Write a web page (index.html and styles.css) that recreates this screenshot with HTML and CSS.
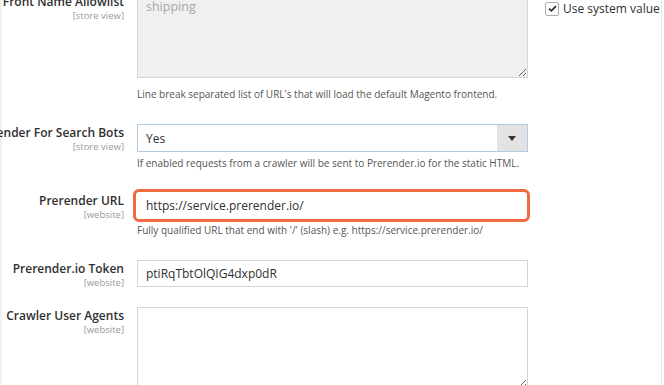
FILE: index.html
```html
<!DOCTYPE html>
<html lang="en">
<head>
    <meta charset="UTF-8">
    <meta name="viewport" content="width=device-width, initial-scale=1.0">
    <title>Prerender Configuration</title>
    <link rel="stylesheet" href="styles.css">
</head>
<body>
    <div class="page">
        <!-- Front Name Allowlist -->
        <div class="row row-allowlist">
            <div class="label">
                <span class="label-text">Front Name Allowlist</span>
                <span class="scope">[store view]</span>
            </div>
            <div class="control">
                <textarea class="textarea textarea-disabled" disabled>shipping</textarea>
                <p class="note note-first">Line break separated list of URL's that will load the default Magento frontend.</p>
            </div>
            <div class="system">
                <label class="checkbox">
                    <span class="box">
                        <svg viewBox="0 0 12 12" width="11" height="11"><path d="M2.2 6.2 L4.8 8.6 L9.8 3.4" fill="none" stroke="#303030" stroke-width="1.9"/></svg>
                    </span>
                    Use system value
                </label>
            </div>
        </div>

        <!-- Prerender For Search Bots -->
        <div class="row row-bots">
            <div class="label">
                <span class="label-text">Prerender For Search Bots</span>
                <span class="scope">[store view]</span>
            </div>
            <div class="control">
                <div class="select">
                    <span class="select-value">Yes</span>
                    <span class="select-arrow"></span>
                </div>
                <p class="note">If enabled requests from a crawler will be sent to Prerender.io for the static HTML.</p>
            </div>
        </div>

        <!-- Prerender URL -->
        <div class="row row-url">
            <div class="label">
                <span class="label-text">Prerender URL</span>
                <span class="scope">[website]</span>
            </div>
            <div class="control">
                <div class="highlight">
                    <input type="text" class="input input-plain" value="https://service.prerender.io/">
                </div>
                <p class="note">Fully qualified URL that end with '/' (slash) e.g. https://service.prerender.io/</p>
            </div>
        </div>

        <!-- Token -->
        <div class="row row-token">
            <div class="label">
                <span class="label-text">Prerender.io Token</span>
                <span class="scope">[website]</span>
            </div>
            <div class="control">
                <input type="text" class="input" value="ptiRqTbtOlQIG4dxp0dR">
            </div>
        </div>

        <!-- Crawler User Agents -->
        <div class="row row-agents">
            <div class="label">
                <span class="label-text">Crawler User Agents</span>
                <span class="scope">[website]</span>
            </div>
            <div class="control">
                <textarea class="textarea textarea-agents"></textarea>
            </div>
        </div>
    </div>
</body>
</html>
```

FILE: styles.css
```css
/* Base */
body {
    margin: 0;
    padding: 0;
    background: #ffffff;
    font-family: "Open Sans", "Liberation Sans", Arial, sans-serif;
    color: #303030;
    overflow: hidden;
}

.page {
    width: 661px;
    height: 385px;
    border-right: 1px solid #e6e6e6;
    box-shadow: inset 3px 0 3px -2px #e4e4e4;
    overflow: hidden;
}

.row {
    display: grid;
    grid-template-columns: 124px 391px 1fr;
    column-gap: 13px;
    align-items: start;
}

.row-allowlist {
    margin-top: -7px;
    margin-bottom: 23px;
}

.row-bots {
    margin-bottom: 22px;
}

.row-url {
    margin-bottom: 23px;
}

.row-token {
    margin-bottom: 19px;
}

/* Labels */
.label {
    display: flex;
    flex-direction: column;
    align-items: flex-end;
    text-align: right;
    padding-top: 1px;
    white-space: nowrap;
}

.label-text {
    font-size: 12px;
    font-weight: 600;
    line-height: 16px;
    color: #303030;
}

.scope {
    font-size: 9.5px;
    line-height: 11px;
    color: #999999;
}

/* Controls */
.textarea {
    display: block;
    box-sizing: border-box;
    width: 391px;
    margin: 0;
    padding: 5px 8px;
    border: 1px solid #d6d6d6;
    font-family: inherit;
    font-size: 12.5px;
    line-height: 16px;
    resize: vertical;
}

.textarea-disabled {
    height: 85px;
    background: #f0f0f0;
    color: #a6a6a6;
    opacity: 1;
}

.textarea-agents {
    height: 82px;
    background: #ffffff;
}

.input {
    display: block;
    box-sizing: border-box;
    width: 391px;
    height: 27px;
    margin: 0;
    padding: 0 8px;
    border: 1px solid #d6d6d6;
    font-family: inherit;
    font-size: 12px;
    color: #303030;
    background: #ffffff;
}

.input-plain {
    border-color: #ffffff;
}

.highlight {
    position: relative;
}

.highlight::after {
    content: "";
    position: absolute;
    top: -3px;
    bottom: -3px;
    left: -4px;
    right: -2px;
    border: 3px solid #ef6b3f;
    border-radius: 6px;
    pointer-events: none;
}

.select {
    box-sizing: border-box;
    display: flex;
    align-items: center;
    justify-content: space-between;
    width: 391px;
    height: 28px;
    border: 1px solid #afcbe8;
    background: #ffffff;
}

.select-value {
    padding-left: 8px;
    font-size: 12px;
}

.select-arrow {
    display: flex;
    align-items: center;
    justify-content: center;
    width: 30px;
    height: 100%;
    background: #e3e3e3;
}

.select-arrow::before {
    content: "";
    border-left: 4px solid transparent;
    border-right: 4px solid transparent;
    border-top: 5px solid #333333;
}

.note {
    margin: 5px 0 0;
    font-size: 10px;
    line-height: 13px;
    color: #555555;
    white-space: nowrap;
}

.note-first {
    margin-top: 10px;
}

/* Use system value */
.system {
    padding-left: 4px;
    padding-top: 7px;
}

.checkbox {
    display: flex;
    align-items: center;
    gap: 4px;
    font-size: 12px;
    color: #303030;
    white-space: nowrap;
}

.box {
    display: flex;
    align-items: center;
    justify-content: center;
    box-sizing: border-box;
    width: 14px;
    height: 14px;
    border: 1px solid #adadad;
    border-radius: 2px;
    background: #ffffff;
}
```
